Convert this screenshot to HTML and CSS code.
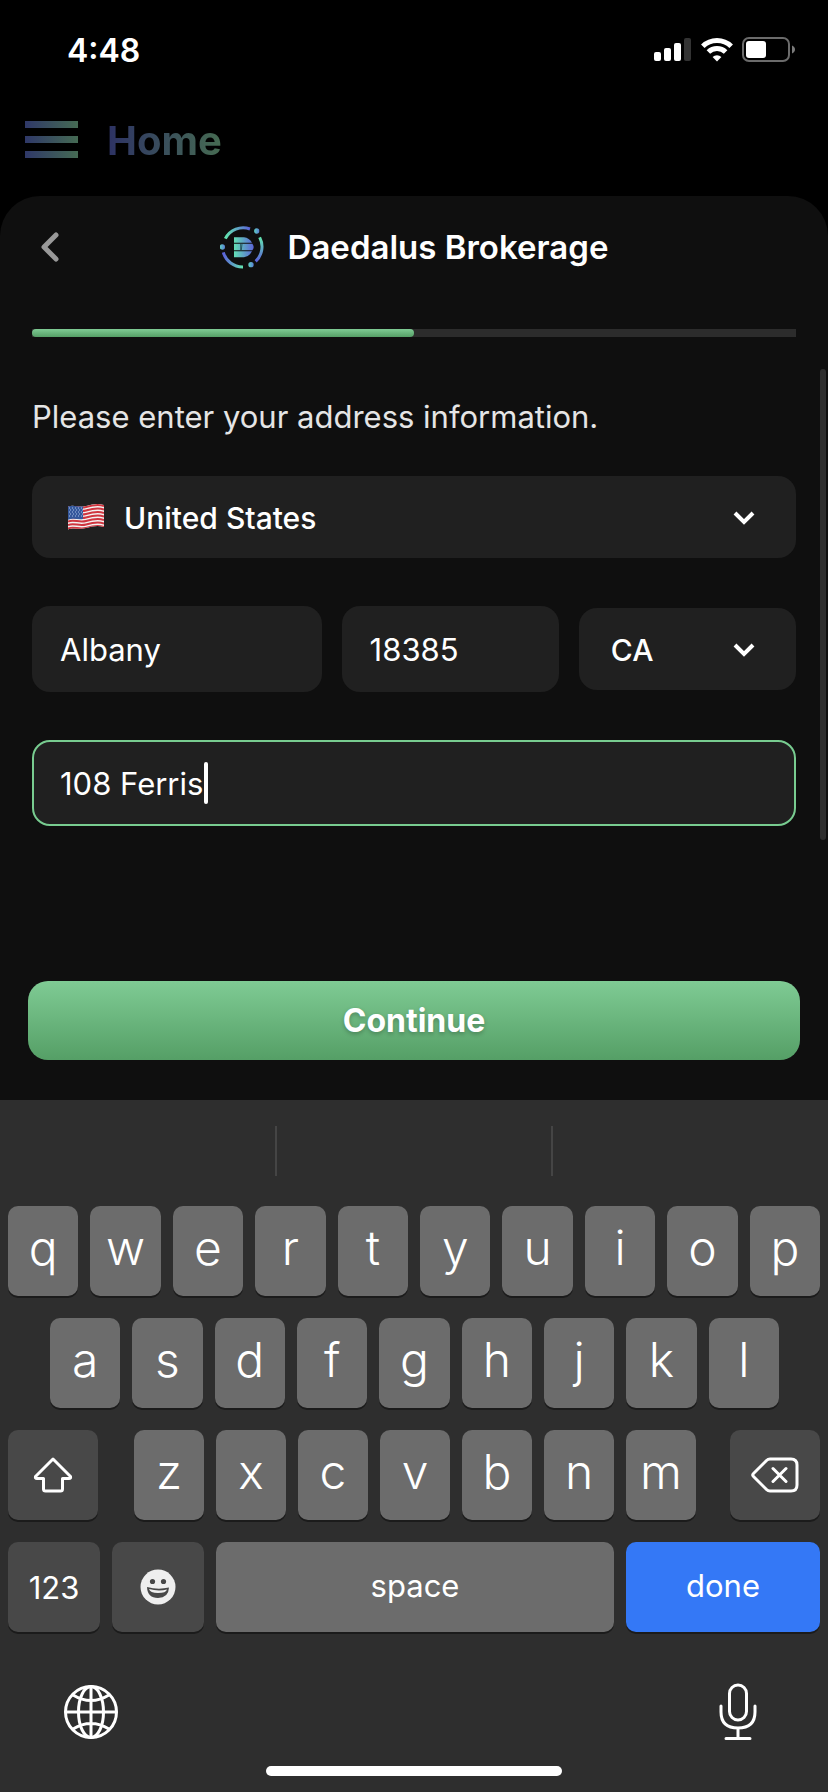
FILE: index.html
```html
<!DOCTYPE html>
<html lang="en">
<head>
<meta charset="utf-8">
<meta name="viewport" content="width=device-width, initial-scale=1">
<title>Daedalus Brokerage</title>
<link rel="stylesheet" href="styles.css">
</head>
<body>
<div class="screen">
  <div class="status">
    <span class="status-time">4:48</span>
    <div class="status-icons">
      <svg width="38" height="24" viewBox="0 0 38 24" fill="#fff" aria-hidden="true">
        <rect x="0" y="14" width="7" height="9" rx="2"/>
        <rect x="10" y="10" width="7" height="13" rx="2"/>
        <rect x="20" y="5" width="7" height="18" rx="2"/>
        <rect x="30" y="0" width="7" height="23" rx="2" fill="#333"/>
      </svg>
      <svg width="32" height="24" viewBox="0 0 32 24" aria-hidden="true">
        <g fill="none" stroke="#fff" stroke-width="5">
          <path d="M1.8 8.3a20.3 20.3 0 0 1 28.4 0"/>
          <path d="M7.4 14a12.3 12.3 0 0 1 17.2 0"/>
        </g>
        <path d="M16 23.5l-4.4-4.5a6.4 6.4 0 0 1 8.8 0z" fill="#fff"/>
      </svg>
      <svg width="54" height="26" viewBox="0 0 54 26" aria-hidden="true">
        <rect x="1" y="1" width="46" height="23" rx="6" fill="none" stroke="#6b6b6b" stroke-width="2"/>
        <rect x="4" y="4" width="20" height="17" rx="3" fill="#fff"/>
        <path d="M50 8.500c4 1.500 4 6.500 0 8z" fill="#7a7a7a"/>
      </svg>
    </div>
  </div>

  <header class="topbar">
    <button class="menu" type="button" aria-label="Menu"><span></span><span></span><span></span></button>
    <h1 class="topbar-title">Home</h1>
  </header>

  <main class="sheet">
    <div class="sheet-head">
      <button class="back" type="button" aria-label="Back">
        <svg width="20" height="30" viewBox="0 0 20 30" fill="none" stroke="#999" stroke-width="5" stroke-linecap="round" stroke-linejoin="round"><path d="M16 3L4 15l12 12"/></svg>
      </button>
      <svg class="logo" width="44" height="43" viewBox="36 32 132 129" aria-hidden="true">
        <defs>
          <linearGradient id="arcTop"><stop offset="0" stop-color="#63e6b0"/><stop offset="1" stop-color="#5b62d9"/></linearGradient>
          <linearGradient id="arcRight" x1="0" y1="0" x2="0" y2="1"><stop offset="0" stop-color="#63e6b0"/><stop offset="1" stop-color="#5b62d9"/></linearGradient>
          <linearGradient id="arcLeft"><stop offset="0" stop-color="#5b62d9"/><stop offset="1" stop-color="#63e6b0"/></linearGradient>
          <linearGradient id="dot"><stop offset="0" stop-color="#5fd0c0"/><stop offset="1" stop-color="#5a7fd6"/></linearGradient>
          <linearGradient id="letter" gradientUnits="userSpaceOnUse" x1="78" y1="0" x2="138" y2="0"><stop offset="0" stop-color="#63e0b4"/><stop offset="1" stop-color="#5b62d9"/></linearGradient>
        </defs>
        <g fill="none" stroke-width="9">
          <path d="M52 70A60 60 0 0 1 126 41" stroke="url(#arcTop)"/>
          <path d="M155 66A60 60 0 0 1 143 138" stroke="url(#arcRight)"/>
          <path d="M46 111A60 60 0 0 0 105 155" stroke="url(#arcLeft)"/>
        </g>
        <g fill="url(#dot)">
          <circle cx="146" cy="47" r="8"/><circle cx="43" cy="95" r="8"/><circle cx="129" cy="148" r="8"/>
        </g>
        <g fill="url(#letter)">
          <path d="M78 66h30q16 2 24 16H78z"/>
          <path d="M78 85h55q8 10 0 20H78z"/>
          <path d="M78 108h54q-8 16-24 18H78z"/>
        </g>
        <path d="M98 86v18M102 86l-2 18" stroke="#0f2f35" stroke-width="2"/>
      </svg>
      <h2 class="sheet-title">Daedalus Brokerage</h2>
    </div>

    <div class="progress" role="progressbar" aria-label="Progress" aria-valuenow="50" aria-valuemin="0" aria-valuemax="100">
      <div class="progress-fill" style="width:50%"></div>
    </div>

    <form class="form">
      <p class="prompt">Please enter your address information.</p>

      <div class="field">
        <svg class="flag" width="38" height="28" viewBox="0 0 38 28" aria-hidden="true">
          <defs><clipPath id="wave"><path d="M1 3.500C7 1 12 5 19 3S31 0 37 2V24C31 22 26 23 19 25S7 24 1 26.500Z"/></clipPath></defs>
          <g clip-path="url(#wave)">
            <rect width="38" height="28" fill="#f3f1f1"/>
            <g fill="none" stroke="#d0353f" stroke-width="2">
              <path d="M1 4.500C7 2 12 6 19 4S31 1 37 3"/>
              <path d="M1 8C7 5.500 12 9.500 19 7.500S31 4.500 37 6.500"/>
              <path d="M1 11.500C7 9 12 13 19 11S31 8 37 10"/>
              <path d="M1 15C7 12.500 12 16.500 19 14.500S31 11.500 37 13.500"/>
              <path d="M1 18.500C7 16 12 20 19 18S31 15 37 17"/>
              <path d="M1 22C7 19.500 12 23.500 19 21.500S31 18.500 37 20.500"/>
              <path d="M1 25.500C7 23 12 27 19 25S31 22 37 24"/>
            </g>
            <path d="M0 0H16V16C11 17 6 14.500 0 17Z" fill="#35589c"/>
            <g stroke="#a9bfe4" stroke-width="1" stroke-dasharray="1 2"><path d="M2 5h14M3 7h13M2 9h14M3 11h13M2 13h14"/></g>
          </g>
        </svg>
        <select class="control select country" aria-label="Country"><option>United States</option></select>
        <svg class="chevron" width="22" height="14" viewBox="0 0 22 14" fill="none" stroke="#fff" stroke-width="4" aria-hidden="true"><path d="M2 2l9 9 9-9"/></svg>
      </div>

      <div class="row">
        <input class="control input city" type="text" value="Albany" aria-label="City">
        <input class="control input" type="text" value="18385" aria-label="ZIP code">
        <div class="field">
          <select class="control select" aria-label="State"><option>CA</option></select>
          <svg class="chevron" width="22" height="14" viewBox="0 0 22 14" fill="none" stroke="#fff" stroke-width="4" aria-hidden="true"><path d="M2 2l9 9 9-9"/></svg>
        </div>
      </div>

      <div class="field">
        <input class="control input active" type="text" value="108 Ferris" aria-label="Street address">
        <span class="caret"></span>
      </div>

      <button class="continue" type="button">Continue</button>
    </form>
    <div class="scrollbar"></div>
  </main>

  <section class="keyboard" aria-label="Keyboard">
    <div class="suggestions"><span></span><span></span><span></span></div>
    <div class="keys">
      <div class="key-row">
        <button class="key">q</button><button class="key">w</button><button class="key">e</button><button class="key">r</button><button class="key">t</button><button class="key">y</button><button class="key">u</button><button class="key">i</button><button class="key">o</button><button class="key">p</button>
      </div>
      <div class="key-row inset">
        <button class="key">a</button><button class="key">s</button><button class="key">d</button><button class="key">f</button><button class="key">g</button><button class="key">h</button><button class="key">j</button><button class="key">k</button><button class="key">l</button>
      </div>
      <div class="key-row">
        <button class="key dark side" aria-label="Shift">
          <svg width="40" height="36" viewBox="0 0 40 36" fill="none" stroke="#fff" stroke-width="3" stroke-linejoin="round"><path d="M20 2L2.500 19.500Q2 21.500 4 21.500H10.500V32Q10.500 34 12.500 34H27.500Q29.500 34 29.500 32V21.500H36Q38 21.500 37.500 19.500Z"/></svg>
        </button>
        <div class="letters">
          <button class="key">z</button><button class="key">x</button><button class="key">c</button><button class="key">v</button><button class="key">b</button><button class="key">n</button><button class="key">m</button>
        </div>
        <button class="key dark side" aria-label="Delete">
          <svg width="48" height="36" viewBox="0 0 48 36" fill="none" stroke="#fff" stroke-width="3" stroke-linecap="round" stroke-linejoin="round"><path d="M19 2H40Q46 2 46 8V28Q46 34 40 34H19Q17 34 15.500 32.500L2.500 19.500Q1 18 2.500 16.500L15.500 3.500Q17 2 19 2ZM22 11.500L35 24.500M35 11.500L22 24.500"/></svg>
        </button>
      </div>
      <div class="key-row">
        <button class="key dark small mode">123</button>
        <button class="key dark mode" aria-label="Emoji">
          <svg width="36" height="36" viewBox="0 0 36 36"><circle cx="18" cy="18" r="17.500" fill="#efefef"/><circle cx="12.500" cy="12.500" r="2.600" fill="#484848"/><circle cx="23.500" cy="12.500" r="2.600" fill="#484848"/><path d="M7 18Q18 21 29 18.500Q28.500 29 18 29T7 18Z" fill="#484848"/><path d="M9 20Q18 22.500 27 20.500Q26 24 18 24T9 20Z" fill="#efefef"/></svg>
        </button>
        <button class="key small word">space</button>
        <button class="key small word done">done</button>
      </div>
    </div>
    <div class="keyboard-foot">
      <button class="plain" aria-label="Next keyboard">
        <svg width="56" height="56" viewBox="0 0 56 56" fill="none" stroke="#fff" stroke-width="3"><circle cx="28" cy="28" r="25.500"/><ellipse cx="28" cy="28" rx="12.500" ry="25.500"/><path d="M28 2V54M2 28H54M10 11Q28 22 46 11M10 45Q28 34 46 45"/></svg>
      </button>
      <button class="plain" aria-label="Dictate">
        <svg width="38" height="58" viewBox="0 0 38 58" fill="none" stroke="#fff" stroke-width="3" stroke-linecap="round"><rect x="10.500" y="2" width="17" height="35" rx="8.500"/><path d="M2 23V29Q2 45 19 45T36 29V23M19 45V55M7 55.500H31"/></svg>
      </button>
    </div>
    <div class="home-indicator"></div>
  </section>
</div>
</body>
</html>
```
FILE: styles.css
```css
* { box-sizing: border-box; }

body {
  margin: 0;
  background: #000;
  color: #fff;
  font-family: Inter, "Liberation Sans", sans-serif;
}

button, input, select { font: inherit; color: inherit; border: 0; margin: 0; }
button { padding: 0; }
h1, h2, p { margin: 0; }
svg { display: block; flex: none; }

.screen {
  display: flex;
  flex-direction: column;
  min-height: 100vh;
}

.status {
  display: flex;
  justify-content: space-between;
  align-items: center;
  height: 100px;
  padding: 0 32px 0 67px;
}
.status-time { font-size: 32px; font-weight: 600; }
.status-icons { display: flex; align-items: center; gap: 9px; }

.topbar {
  display: flex;
  align-items: center;
  gap: 29px;
  height: 96px;
  padding: 0 25px 15px;
}
.menu {
  display: flex;
  flex-direction: column;
  gap: 8px;
  width: 53px;
  padding-bottom: 3px;
  background: none;
}
.menu span {
  height: 7px;
  background: linear-gradient(90deg, #2f3868, #456a53);
}
.topbar-title {
  font-size: 40px;
  line-height: 48px;
  font-weight: 700;
  background: linear-gradient(90deg, #2d3264, #466b52);
  background-clip: text;
  -webkit-background-clip: text;
  color: transparent;
}

.sheet {
  position: relative;
  flex: 1;
  display: flex;
  flex-direction: column;
  padding: 0 32px 40px;
  border-radius: 40px 40px 0 0;
  background: #0f0f0f;
}
.sheet-head {
  position: relative;
  display: flex;
  justify-content: center;
  align-items: center;
  gap: 24px;
  height: 102px;
}
.back {
  position: absolute;
  left: 8px;
  background: none;
}
.sheet-title { font-size: 33px; line-height: 40px; font-weight: 600; }

.progress {
  height: 8px;
  margin-top: 31px;
  background: #2c2c2c;
}
.progress-fill {
  height: 100%;
  border-radius: 4px;
  background: linear-gradient(#7fcb94, #559f66);
}

.form {
  flex: 1;
  display: flex;
  flex-direction: column;
  gap: 48px;
  padding-top: 60px;
}
.prompt {
  margin-bottom: -9px;
  font-size: 31px;
  line-height: 40px;
  color: #e5e5e5;
}
.row {
  display: grid;
  grid-template-columns: 4fr 3fr 3fr;
  align-items: center;
  gap: 20px;
}
.field { position: relative; }
.control {
  display: block;
  width: 100%;
  min-width: 0;
  border-radius: 18px;
  background: #202020;
  outline: 0;
}
.input {
  height: 86px;
  padding: 0 28px;
  font-size: 31px;
}
.active {
  padding: 0 26px;
  border: 2px solid #78cc90;
  caret-color: transparent;
}
.select {
  height: 82px;
  padding: 2px 60px 0 32px;
  font-size: 30px;
  font-weight: 500;
  appearance: none;
}
.country { padding-left: 92px; }
.flag { position: absolute; left: 35px; top: 27px; }
.chevron { position: absolute; right: 41px; top: 35px; pointer-events: none; }
.caret {
  position: absolute;
  left: 172px;
  top: 22px;
  width: 4px;
  height: 42px;
  border-radius: 2px;
  background: #fff;
}
.continue {
  height: 79px;
  margin: auto -4px 0;
  border-radius: 20px;
  background: linear-gradient(#7fcb94, #559f66);
  font-size: 32px;
  font-weight: 700;
  text-shadow: 0 2px 4px rgba(0, 0, 0, 0.25);
}
.scrollbar {
  position: absolute;
  right: 2px;
  top: 173px;
  width: 6px;
  height: 471px;
  border-radius: 3px;
  background: #2e2e2e;
}

.keyboard {
  padding-bottom: 16px;
  background: #2e2e2e;
}
.suggestions {
  display: flex;
  height: 106px;
  padding: 26px 0 30px;
}
.suggestions span { flex: 1; }
.suggestions span + span { border-left: 2px solid #454545; }
.keys {
  display: flex;
  flex-direction: column;
  gap: 22px;
  padding: 0 8px;
}
.key-row { display: flex; gap: 12px; }
.inset { padding: 0 41px 0 42px; }
.letters {
  flex: 1;
  display: flex;
  gap: 12px;
  padding: 0 22px 0 24px;
}
.key {
  flex: 1;
  display: flex;
  justify-content: center;
  align-items: center;
  min-width: 0;
  height: 90px;
  padding-bottom: 8px;
  border-radius: 10px;
  background: #6c6c6c;
  box-shadow: 0 2px 0 #1b1b1b;
  font-size: 48px;
  font-weight: 300;
}
.dark { padding-bottom: 0; background: #484848; }
.side { flex: 0 0 90px; }
.mode { flex: 0 0 92px; }
.small { font-size: 31px; font-weight: 400; }
.word { padding-bottom: 4px; }
.done { flex: 0 0 194px; background: #3478f6; }
.keyboard-foot {
  display: flex;
  justify-content: space-between;
  align-items: center;
  height: 134px;
  padding: 25px 71px 0 63px;
}
.plain { background: none; }
.home-indicator {
  width: 296px;
  height: 10px;
  margin: 0 auto;
  border-radius: 5px;
  background: #fff;
}
```
